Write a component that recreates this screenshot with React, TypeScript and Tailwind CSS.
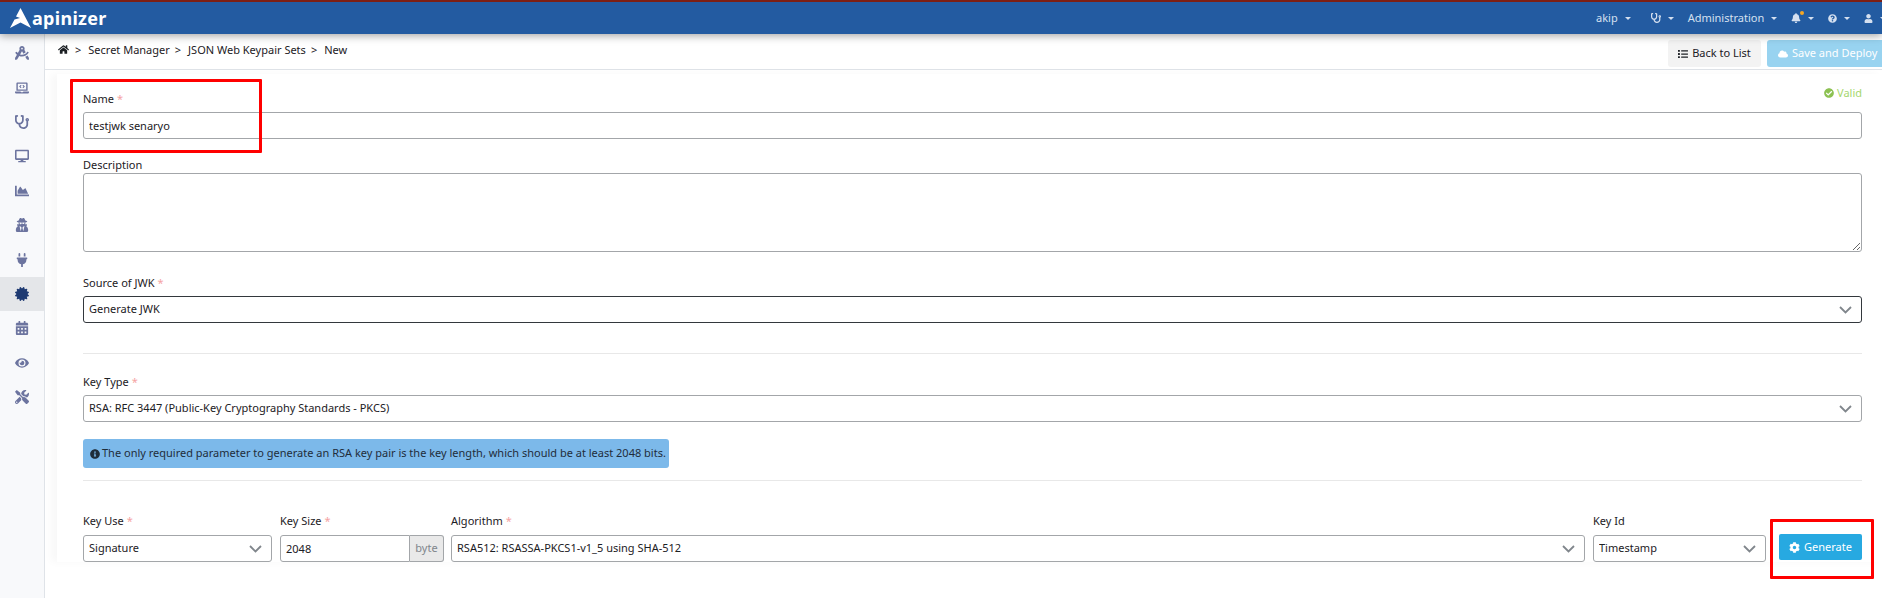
import {
  FaBell,
  FaCalendarAlt,
  FaCertificate,
  FaChartArea,
  FaCheckCircle,
  FaCloud,
  FaCog,
  FaDesktop,
  FaDraftingCompass,
  FaEye,
  FaHome,
  FaInfoCircle,
  FaLaptopCode,
  FaList,
  FaPlug,
  FaQuestionCircle,
  FaStethoscope,
  FaTools,
  FaUser,
  FaUserSecret,
} from 'react-icons/fa'

const SIDE_ITEMS = [
  FaDraftingCompass,
  FaLaptopCode,
  FaStethoscope,
  FaDesktop,
  FaChartArea,
  FaUserSecret,
  FaPlug,
  FaCertificate,
  FaCalendarAlt,
  FaEye,
  FaTools,
]

const Caret = () => <span className="ml-[7px] inline-block h-0 w-0 shrink-0 border-x-[3px] border-t-[3px] border-x-transparent border-t-[#d5e0f0]" />

const Label = ({text, required}: {text: string; required?: boolean}) => (
  <label className="block h-[17px] text-[11px] leading-[15px] text-[#1c2024]">
    {text}
    {required && <span className="ml-[3px] text-[#f5a3a3]">*</span>}
  </label>
)

const Chevron = () => (
  <svg className="pointer-events-none absolute right-[10px] top-[10px]" width="13" height="8" viewBox="0 0 13 8" fill="none">
    <path d="M1 1l5.5 5.5L12 1" stroke="#80868c" strokeWidth="1.8" />
  </svg>
)

const SelectBox = ({value, dark}: {value: string; dark?: boolean}) => (
  <div className="relative w-full">
    <select
      defaultValue={value}
      className={`block h-[27px] w-full appearance-none rounded-[3px] border bg-white px-[5px] text-[11px] text-[#1c2024] ${dark ? 'border-[#33383d]' : 'border-[#a3a6a9]'}`}
    >
      <option>{value}</option>
    </select>
    <Chevron />
  </div>
)

const TextBox = ({value}: {value?: string}) => (
  <input
    defaultValue={value}
    className="block h-[27px] w-full rounded-[3px] border border-[#a3a6a9] bg-white px-[5px] text-[11px] text-[#1c2024]"
  />
)

export default function App() {
  return (
    <div className="relative flex h-[598px] w-[1882px] flex-col overflow-hidden bg-white font-['Noto_Sans','Open_Sans',sans-serif]">
      {/* header */}
      <header className="relative z-10 flex h-[34px] shrink-0 items-center justify-between border-t-2 border-[#7d1f14] bg-[#235ba1] pl-[10px] shadow-[0_2px_8px_rgba(0,0,0,0.35)]">
        <div className="flex items-center">
          <svg width="21" height="21" viewBox="0 0 21 21">
            <path d="M10.5 0L21 20L10.5 14.5L0 20L4.5 11.5L10 10L6 8.5Z" fill="#fff" />
          </svg>
          <span className="ml-[1px] text-[18px] font-bold leading-none tracking-[0.3px] text-white">apinizer</span>
        </div>
        <div className="flex w-[286px] shrink-0 items-center text-[11px] text-[#d5e0f0]">
          <span>akip</span>
          <Caret />
          <FaStethoscope className="ml-[20px] shrink-0 text-[10px]" />
          <Caret />
          <span className="ml-[14px]">Administration</span>
          <Caret />
          <span className="relative ml-[14px]">
            <FaBell className="text-[10px]" />
            <span className="absolute -right-[3px] -top-[2px] h-[4px] w-[4px] rounded-full bg-[#f5a623]" />
          </span>
          <Caret />
          <FaQuestionCircle className="ml-[14px] shrink-0 text-[9px]" />
          <Caret />
          <FaUser className="ml-[14px] shrink-0 text-[9px]" />
          <Caret />
        </div>
      </header>

      <div className="flex min-h-0 flex-1">
        {/* sidebar */}
        <aside className="w-[45px] shrink-0 border-r border-[#dfe3e8] bg-[#f8f9fb] pt-[2px]">
          {SIDE_ITEMS.map((Icon, i) => (
            <div key={i} className={`flex h-[34.4px] items-center justify-center ${i === 7 ? 'bg-[#e4e6e9]' : ''}`}>
              <Icon className={`text-[14px] ${i === 7 ? 'text-[#1e3a72]' : 'text-[#6c749f]'}`} />
            </div>
          ))}
        </aside>

        <main className="min-w-0 flex-1">
          {/* breadcrumb + actions */}
          <div className="flex h-[36px] items-start justify-between border-b border-[#dfe3e8] pl-[13px]">
            <div className="flex items-center pt-[7px] text-[11px] leading-[17px] text-[#1c2024]">
              <FaHome className="text-[11px] text-[#1c2024]" />
              <span className="ml-[6px]">&gt;</span>
              <span className="ml-[7px]">Secret Manager</span>
              <span className="ml-[5px]">&gt;</span>
              <span className="ml-[7px]">JSON Web Keypair Sets</span>
              <span className="ml-[5px]">&gt;</span>
              <span className="ml-[7px]">New</span>
            </div>
            <div className="flex items-center gap-[6px] pt-[6px]">
              <button className="flex h-[27px] w-[93px] items-center justify-center rounded-[3px] bg-[#f3f3f3] text-[11px] text-[#1c2024]">
                <FaList className="mr-[4px] text-[10px]" />
                Back to List
              </button>
              <button className="flex h-[27px] w-[115px] items-center rounded-l-[3px] bg-[#98d3f0] pl-[11px] text-[11px] whitespace-nowrap text-white">
                <FaCloud className="mr-[4px] text-[10px]" />
                Save and Deploy
              </button>
            </div>
          </div>

          {/* form */}
          <div className="ml-[12px] mt-[4px] bg-white pl-[26px] pr-[20px] pt-[10px] shadow-[-6px_0_8px_rgba(0,0,0,0.03)]">
            <div className="flex h-[24px] justify-between">
              <div className="self-end">
                <Label text="Name" required />
              </div>
              <span className="flex h-[17px] items-center self-start text-[11px] leading-[17px] text-[#a5d76e]">
                <FaCheckCircle className="mr-[3px] text-[10px] text-[#8cc152]" />
                Valid
              </span>
            </div>
            <div className="mt-[4px]">
              <TextBox value="testjwk senaryo" />
            </div>

            <div className="mt-[18px]">
              <Label text="Description" />
            </div>
            <textarea className="-mt-[1px] block h-[79px] w-full rounded-[3px] border border-[#a3a6a9] bg-white" />

            <div className="mt-[23px]">
              <Label text="Source of JWK" required />
            </div>
            <div className="mt-[4px]">
              <SelectBox value="Generate JWK" dark />
            </div>

            <hr className="mt-[30px] border-[#e8e8e8]" />

            <div className="mt-[20px]">
              <Label text="Key Type" required />
            </div>
            <div className="mt-[4px]">
              <SelectBox value="RSA: RFC 3447 (Public-Key Cryptography Standards - PKCS)" />
            </div>

            <div className="mt-[17px] flex h-[29px] w-[586px] items-center rounded-[3px] bg-[#7cb9ea] pl-[7px] text-[11px] whitespace-nowrap text-[#1f2d3a]">
              <FaInfoCircle className="mr-[2px] shrink-0 text-[10px] text-[#1f2d3a]" />
              The only required parameter to generate an RSA key pair is the key length, which should be at least 2048 bits.
            </div>

            <hr className="mt-[12px] border-[#e8e8e8]" />

            <div className="mt-[32px] flex items-start gap-[7px]">
              <div className="w-[189px] shrink-0">
                <Label text="Key Use" required />
                <div className="mt-[5px]">
                  <SelectBox value="Signature" />
                </div>
              </div>
              <div className="ml-[1px] w-[164px] shrink-0">
                <Label text="Key Size" required />
                <div className="mt-[5px] flex">
                  <div className="min-w-0 flex-1">
                    <input
                      defaultValue="2048"
                      className="block h-[27px] w-full rounded-l-[3px] border border-[#a3a6a9] bg-white px-[5px] text-[11px] text-[#1c2024]"
                    />
                  </div>
                  <span className="flex h-[27px] w-[34px] items-center justify-center rounded-r-[3px] border border-l-0 border-[#a3a6a9] bg-[#e9e9e9] text-[11px] text-[#80868c]">
                    byte
                  </span>
                </div>
              </div>
              <div className="min-w-0 flex-1">
                <Label text="Algorithm" required />
                <div className="mt-[5px]">
                  <SelectBox value="RSA512: RSASSA-PKCS1-v1_5 using SHA-512" />
                </div>
              </div>
              <div className="ml-[1px] w-[173px] shrink-0">
                <Label text="Key Id" />
                <div className="mt-[5px]">
                  <SelectBox value="Timestamp" />
                </div>
              </div>
              <button className="ml-[6px] mt-[21px] flex h-[26px] w-[83px] shrink-0 items-center justify-center rounded-[2px] bg-[#27a9e1] text-[11px] text-white">
                <FaCog className="mr-[4px] text-[11px]" />
                Generate
              </button>
            </div>
          </div>
        </main>
      </div>

      {/* red annotation boxes */}
      <div className="pointer-events-none absolute left-[70px] top-[79px] z-20 h-[74px] w-[192px] rounded-[1px] border-[3px] border-[#ff0000]" />
      <div className="pointer-events-none absolute left-[1770px] top-[519px] z-20 h-[60px] w-[104px] rounded-[1px] border-[3px] border-[#ff0000]" />
    </div>
  )
}
